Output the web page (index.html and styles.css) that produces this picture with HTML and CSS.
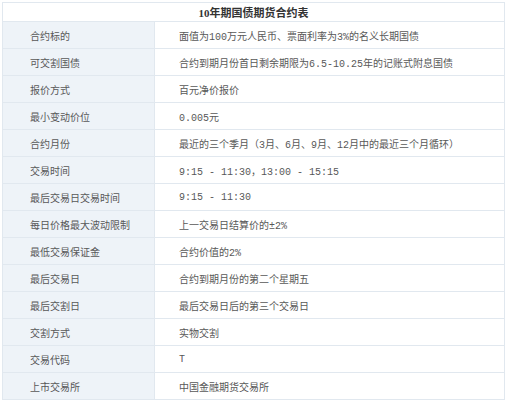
FILE: index.html
```html
<!DOCTYPE html>
<html lang="zh">
<head>
<meta charset="utf-8">
<link rel="stylesheet" href="styles.css">
</head>
<body>
<table class="spec">
  <tr class="title-row"><th colspan="2">10年期国债期货合约表</th></tr>
  <tr><td class="k">合约标的</td><td class="v">面值为100万元人民币、票面利率为3%的名义长期国债</td></tr>
  <tr><td class="k">可交割国债</td><td class="v">合约到期月份首日剩余期限为6.5-10.25年的记账式附息国债</td></tr>
  <tr><td class="k">报价方式</td><td class="v">百元净价报价</td></tr>
  <tr><td class="k">最小变动价位</td><td class="v">0.005元</td></tr>
  <tr><td class="k">合约月份</td><td class="v">最近的三个季月（3月、6月、9月、12月中的最近三个月循环）</td></tr>
  <tr><td class="k">交易时间</td><td class="v">9:15 - 11:30，13:00 - 15:15</td></tr>
  <tr><td class="k">最后交易日交易时间</td><td class="v">9:15 - 11:30</td></tr>
  <tr><td class="k">每日价格最大波动限制</td><td class="v">上一交易日结算价的±2%</td></tr>
  <tr><td class="k">最低交易保证金</td><td class="v">合约价值的2%</td></tr>
  <tr><td class="k">最后交易日</td><td class="v">合约到期月份的第二个星期五</td></tr>
  <tr><td class="k">最后交割日</td><td class="v">最后交易日后的第三个交易日</td></tr>
  <tr><td class="k">交割方式</td><td class="v">实物交割</td></tr>
  <tr><td class="k">交易代码</td><td class="v">T</td></tr>
  <tr><td class="k">上市交易所</td><td class="v">中国金融期货交易所</td></tr>
</table>
</body>
</html>
```
FILE: styles.css
```css
html, body {
  margin: 0;
  padding: 0;
  background: #ffffff;
}
.spec {
  margin: 2px 0 0 2px;
  width: 503px;
  border-collapse: collapse;
  font-family: "Liberation Mono", "Noto Sans CJK SC", monospace;
  font-size: 10px;
  color: #585858;
}
.spec th, .spec td {
  border: 1px solid #e1e8ef;
  padding: 0;
}
.title-row th {
  height: 18px;
  font-family: "Liberation Serif", "Noto Sans CJK SC", serif;
  font-weight: bold;
  font-size: 11px;
  color: #333333;
  text-align: center;
  background: #ffffff;
}
.spec td {
  height: 26px;
}
.k {
  width: 124px;
  padding-left: 27px !important;
  background: #eef3f8;
  font-family: "Noto Sans CJK SC", sans-serif;
}
.v {
  padding-left: 24px !important;
  background: #ffffff;
}
```
